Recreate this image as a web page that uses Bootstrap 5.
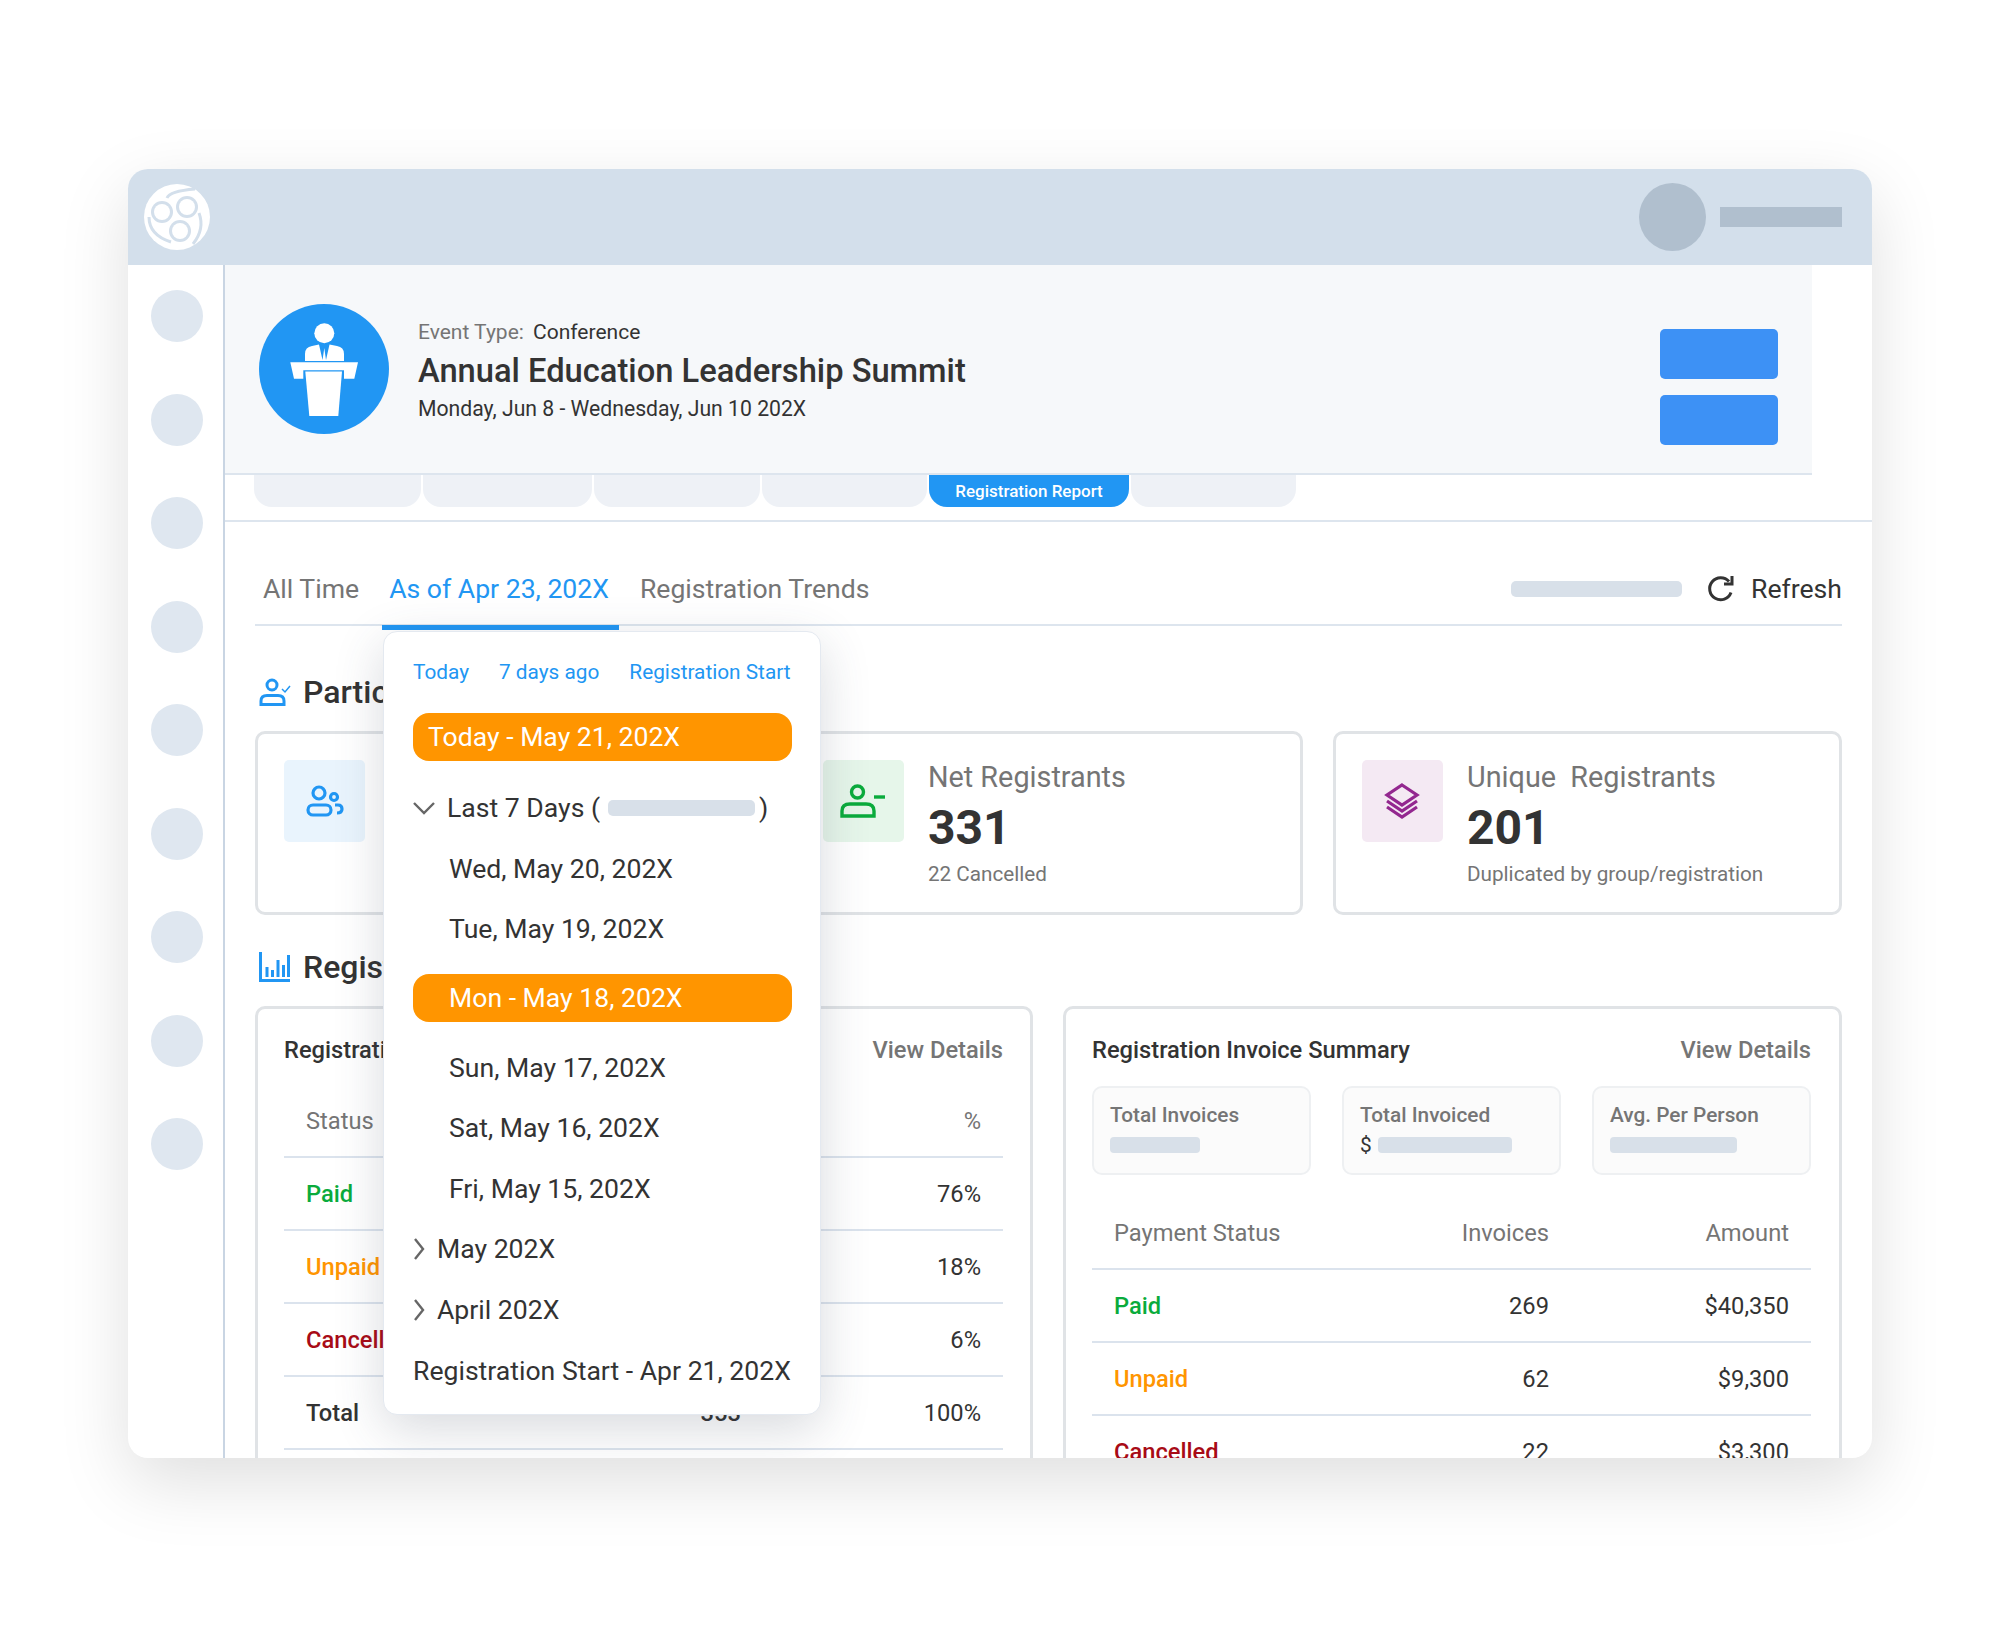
<!DOCTYPE html>
<html lang="en">
<head>
  <meta charset="UTF-8" />
  <title>Registration Report</title>
  <link href="https://cdn.jsdelivr.net/npm/bootstrap@5.3.0/dist/css/bootstrap.min.css" rel="stylesheet">
  <style>
    body { background: #fff; font-family: Roboto, "Liberation Sans", sans-serif; color: #333; width: 2000px; height: 1627px; overflow: hidden; }
    .app-window { width: 1744px; height: 1289px; margin: 169px 0 0 128px; background: #fff; border-radius: 20px; overflow: hidden; box-shadow: 0 24px 70px rgba(0,0,0,.13); position: relative; }
    .window-wrap { height: 1289px; }
    .top-strip { height: 96px; background: #d3dfeb; padding: 0 30px 0 15px; }
    .strip-avatar { width: 67px; height: 68px; border-radius: 50%; background: #b0bfce; margin-right: 14px; }
    .strip-name { width: 122px; height: 20px; background: #b0bfce; }
    .side-rail { width: 97px; flex: none; border-right: 2px solid #c9d5e3; padding: 25px 0 0 3px; gap: 51.5px; height: 1193px; }
    .rail-dot { width: 52px; height: 52px; border-radius: 50%; background: #dfe7f0; flex-shrink: 0; }
    .main-col { width: 1647px; flex: none; }
    .event-panel { width: 1587px; height: 210px; background: #f6f8fa; border-bottom: 2px solid #dde5ee; padding: 0 34px; }
    .event-text { margin-left: 29px; flex: 1; padding-top: 3px; }
    .event-type { font-size: 21px; line-height: 28px; }
    .event-type span { color: #757575; margin-right: 4px; }
    .event-title { font-size: 32.7px; font-weight: 500; line-height: 48px; color: #333; margin: 1px 0 0; }
    .event-date { font-size: 21.2px; line-height: 28px; }
    .btn-stack { margin-top: 36px; }
    .blue-btn { width: 118px; height: 50px; background: #3d91f5; border-radius: 5px; display: block; }
    .report-tabs { padding-left: 29px; gap: 2px; height: 32px; }
    .report-tab { height: 32px; background: #eef1f6; border-radius: 0 0 18px 18px; }
    .report-tab:nth-child(1) { width: 167px; }
    .report-tab:nth-child(2) { width: 169px; }
    .report-tab:nth-child(3) { width: 166px; }
    .report-tab:nth-child(4) { width: 165px; }
    .report-tab:nth-child(5) { width: 200px; }
    .report-tab:nth-child(6) { width: 165px; }
    .report-tab.on { background: #2196f3; color: #fff; font-size: 17px; font-weight: 500; line-height: 32px; text-align: center; }
    .tab-rule { height: 2px; background: #dde5ee; margin-top: 13px; }
    .page-body { padding: 0 30px; }
    .sub-nav { margin-top: 40px; height: 64px; border-bottom: 2px solid #dde5ee; font-size: 26.6px; line-height: 54px; color: #757575; }
    .sub-nav .nav-link { color: #757575; padding: 0 8px; height: 64px; }
    .sub-nav .nav-link.on { color: #2196f3; padding: 0 10px 0 7px; border-bottom: 5px solid #2196f3; margin: 0 13px 0 15px; height: 68px; position: relative; }
    .date-bar { width: 171px; height: 16px; background: #d8e0e9; border-radius: 5px; margin-right: 24px; }
    .refresh-btn { color: #333; font-size: 26.6px; gap: 15px; }
    .sec-head { font-size: 32px; font-weight: 500; line-height: 40px; margin: 0; color: #333; gap: 12px; }
    .first-head { margin-top: 46px; margin-bottom: 19px; }
    .next-head { margin-top: 32px; margin-bottom: 19px; }
    .stat-row { --bs-gutter-x: 30px; }
    .stat-card { height: 184px; border: 3px solid #e0e3e6; border-radius: 10px; padding: 26px 26px 0; flex-direction: row; }
    .stat-box { width: 81px; height: 82px; border-radius: 5px; flex: none; margin-right: 24px; }
    .box-blue { background: #e9f4fd; }
    .box-green { background: #e6f6ea; }
    .box-purple { background: #f4e9f3; }
    .stat-label { font-size: 28.8px; line-height: 34px; color: #757575; }
    .stat-num { font-size: 48px; font-weight: 700; line-height: 60px; margin-top: 4px; color: #333; }
    .stat-note { font-size: 20.7px; line-height: 28px; color: #757575; margin-top: 2px; }
    .sum-row { --bs-gutter-x: 31px; }
    .sum-card { height: 600px; border: 3px solid #e0e3e6; border-radius: 10px; padding: 26px 27px 0 26px; }
    .sum-card.right-card { margin-left: -1px; padding-right: 28px; }
    .sum-head { font-size: 23.7px; font-weight: 500; line-height: 30px; color: #333; }
    .sum-head a { font-weight: 500; color: #757575; text-decoration: none; }
    .mini-row { gap: 31px; margin-top: 21px; }
    .mini-card { width: 219px; height: 89px; border: 2px solid #eef0f2; border-radius: 10px; background: #fbfbfb; padding: 14px 16px 0; font-size: 20.8px; font-weight: 500; color: #757575; line-height: 26px; }
    .mini-fill { height: 16px; background: #d8e0e9; border-radius: 4px; margin-top: 9px; }
    .mini-dollar { color: #333; font-weight: 400; line-height: 16px; margin-top: 9px; gap: 6px; }
    .mini-dollar .mini-fill { margin-top: 0; }
    .sum-table { margin: 0; font-size: 23.7px; --bs-table-color: #333; --bs-table-bg: transparent; }
    .sum-table th, .sum-table td { height: 73px; padding: 2px 22px 0; vertical-align: middle; border-bottom: 2px solid #dbe3ed; }
    .sum-table th { font-weight: 400; color: #757575; padding-top: 4px; }
    .sum-table th:last-child { width: 240px; }
    .sum-table .st-paid { color: #0aab3c; font-weight: 500; }
    .sum-table .st-unpaid { color: #ff9500; font-weight: 500; }
    .sum-table .st-cancel { color: #a80b16; font-weight: 500; }
    .sum-table .st-total { font-weight: 500; }
    .left-table { margin-top: 19px; }
    .right-table { margin-top: 21px; }
    .date-pop { position: absolute; left: 255px; top: 462px; width: 438px; height: 784px; background: #fff; border: 1px solid #e4e9f0; border-radius: 14px; box-shadow: 0 14px 50px rgba(60,70,90,.2); padding: 25px 29px 0; z-index: 5; font-size: 26.6px; color: #333; }
    .pop-links { font-size: 20.8px; line-height: 30px; gap: 30px; }
    .pop-links a { color: #2196f3; text-decoration: none; }
    .pop-bar { width: 379px; height: 48px; background: #ff9500; border-radius: 16px; color: #fff; line-height: 48px; padding-left: 15px; }
    .bar-one { margin-top: 26px; margin-bottom: 17px; }
    .bar-two { margin-top: 14px; margin-bottom: 16px; padding-left: 36px; }
    .pop-row { height: 60.5px; line-height: 60px; white-space: nowrap; }
    .pop-row.in { padding-left: 36px; }
    .pop-row.end-row { line-height: 62px; }
    .pop-fill { width: 147px; height: 16px; background: #d8e0e9; border-radius: 5px; margin: 0 4px 0 8px; }
  </style>
</head>
<body>
  <div class="window-wrap">
  <div class="app-window">
    <!-- top bar -->
    <div class="top-strip d-flex align-items-center">
      <svg width="68" height="68" viewBox="0 0 68 68">
        <circle cx="34" cy="34" r="33" fill="#fff"/>
        <path d="M24 15 Q27 8 52 6 M56 30 Q62 46 50 61 M6 34 Q6 52 28 59" fill="none" stroke="#d3dfeb" stroke-width="3"/>
        <circle cx="19" cy="29" r="11" fill="#d3dfeb"/><circle cx="19" cy="29" r="8" fill="#fff"/>
        <circle cx="44" cy="24" r="11" fill="#d3dfeb"/><circle cx="44" cy="24" r="8" fill="#fff"/>
        <circle cx="37" cy="48" r="11" fill="#d3dfeb"/><circle cx="37" cy="48" r="8" fill="#fff"/>
      </svg>
      <div class="strip-avatar ms-auto"></div>
      <div class="strip-name"></div>
    </div>

    <div class="d-flex">
      <!-- left rail -->
      <div class="side-rail d-flex flex-column align-items-center">
        <div class="rail-dot"></div><div class="rail-dot"></div><div class="rail-dot"></div>
        <div class="rail-dot"></div><div class="rail-dot"></div><div class="rail-dot"></div>
        <div class="rail-dot"></div><div class="rail-dot"></div><div class="rail-dot"></div>
      </div>

      <div class="main-col">
        <!-- event header -->
        <div class="event-panel d-flex align-items-center">
          <svg width="130" height="130" viewBox="0 0 130 130" class="flex-shrink-0">
            <circle cx="65" cy="65" r="65" fill="#2196f3"/>
            <circle cx="65.3" cy="29.3" r="10" fill="#fff"/>
            <path d="M46 57 V50 Q46 43 53 42 L60 40.5 L63.5 56 L65.3 44 L67 56 L70.5 40.5 L78 42 Q85 43 85 50 V57 Z" fill="#fff"/>
            <path d="M31.3 58.3 H99 L95.3 74.7 H85 V66.3 H44.3 V74.7 H35 Z" fill="#fff"/>
            <path d="M46.3 67.5 H83 L79.3 112 H50.3 Z" fill="#fff"/>
          </svg>
          <div class="event-text">
            <div class="event-type"><span>Event Type:</span> Conference</div>
            <h1 class="event-title">Annual Education Leadership Summit</h1>
            <div class="event-date">Monday, Jun 8 - Wednesday, Jun 10 202X</div>
          </div>
          <div class="btn-stack d-flex flex-column gap-3">
            <span class="blue-btn"></span>
            <span class="blue-btn"></span>
          </div>
        </div>

        <!-- report tabs -->
        <div class="report-tabs d-flex">
          <div class="report-tab"></div>
          <div class="report-tab"></div>
          <div class="report-tab"></div>
          <div class="report-tab"></div>
          <div class="report-tab on">Registration Report</div>
          <div class="report-tab"></div>
        </div>
        <div class="tab-rule"></div>

        <div class="page-body">
          <div class="sub-nav d-flex align-items-start">
            <a class="nav-link" href="#">All Time</a>
            <a class="nav-link on" href="#">As of Apr 23, 202X</a>
            <a class="nav-link" href="#">Registration Trends</a>
            <div class="ms-auto d-flex align-items-center" style="height:54px">
              <div class="date-bar"></div>
              <div class="refresh-btn d-flex align-items-center">
                <svg width="30" height="30" viewBox="0 0 30 30" fill="none" stroke="#333" stroke-width="3"><path d="M25 18.5 A11 11 0 1 1 23 7.5"/><path d="M26 2 V10 H18"/></svg>
                Refresh
              </div>
            </div>
          </div>

          <h2 class="sec-head first-head d-flex align-items-center">
            <svg width="32" height="28" viewBox="0 0 32 28" fill="none" stroke="#2196f3" stroke-width="3" class="flex-shrink-0 ms-1"><circle cx="13" cy="7" r="5"/><path d="M2 26.5 V23 Q2 17.5 8 17.5 H19 Q25 17.5 25 23 V26.5 Z"/><path d="M23 11 L26 14 L31 8" stroke-width="1.5"/></svg>
            Participant Summary
          </h2>
          <div class="row stat-row">
            <div class="col-4"><div class="card stat-card">
              <div class="stat-box box-blue d-flex align-items-center justify-content-center">
                <svg width="38" height="32" viewBox="0 0 38 32" fill="none" stroke="#2196f3" stroke-width="3.2"><circle cx="13" cy="8" r="6"/><circle cx="28" cy="12" r="3.5"/><rect x="2" y="20" width="23" height="10" rx="5"/><path d="M29 20 H32 Q36 20 36 24 Q36 28 31 28"/></svg>
              </div>
              <div><div class="stat-label">Total Registrants</div><div class="stat-num">353</div></div>
            </div></div>
            <div class="col-4"><div class="card stat-card">
              <div class="stat-box box-green d-flex align-items-center justify-content-center">
                <svg width="46" height="34" viewBox="0 0 46 34" fill="none" stroke="#0aab3c" stroke-width="3.4"><circle cx="17.5" cy="8" r="6"/><path d="M2 32 V27 Q2 20 10 20 H26 Q34 20 34 27 V32 Z"/><path d="M34 13 H45"/></svg>
              </div>
              <div><div class="stat-label">Net Registrants</div><div class="stat-num">331</div><div class="stat-note">22 Cancelled</div></div>
            </div></div>
            <div class="col-4"><div class="card stat-card">
              <div class="stat-box box-purple d-flex align-items-center justify-content-center">
                <svg width="36" height="36" viewBox="0 0 36 36" fill="none" stroke="#93278f" stroke-width="3.2"><path d="M18 2 L33 12 L18 22 L3 12 Z"/><path d="M3 18 L18 28 L33 18"/><path d="M3 24 L18 34 L33 24"/></svg>
              </div>
              <div><div class="stat-label">Unique&nbsp; Registrants</div><div class="stat-num">201</div><div class="stat-note">Duplicated by group/registration</div></div>
            </div></div>
          </div>

          <h2 class="sec-head next-head d-flex align-items-center">
            <svg width="32" height="30" viewBox="0 0 32 30" fill="none" stroke="#2196f3" stroke-width="3" class="flex-shrink-0 ms-1"><path d="M1.5 0 V28.5 H31"/><path d="M8 25 V15 M13.5 25 V18 M19 25 V8 M24.5 25 V13 M29.5 25 V3"/></svg>
            Registration Summary
          </h2>
          <div class="row sum-row">
            <div class="col-6"><div class="card sum-card">
              <div class="sum-head d-flex justify-content-between"><span>Registration Summary</span><a href="#">View Details</a></div>
              <table class="table sum-table left-table">
                <thead><tr><th>Status</th><th class="text-end">Registrants</th><th class="text-end">%</th></tr></thead>
                <tbody>
                  <tr><td class="st-paid">Paid</td><td class="text-end">269</td><td class="text-end">76%</td></tr>
                  <tr><td class="st-unpaid">Unpaid</td><td class="text-end">62</td><td class="text-end">18%</td></tr>
                  <tr><td class="st-cancel">Cancelled</td><td class="text-end">22</td><td class="text-end">6%</td></tr>
                  <tr><td class="st-total">Total</td><td class="text-end st-total">353</td><td class="text-end">100%</td></tr>
                </tbody>
              </table>
            </div></div>
            <div class="col-6"><div class="card sum-card right-card">
              <div class="sum-head d-flex justify-content-between"><span>Registration Invoice Summary</span><a href="#">View Details</a></div>
              <div class="mini-row d-flex">
                <div class="mini-card">Total Invoices<div class="mini-fill" style="width:90px"></div></div>
                <div class="mini-card">Total Invoiced<div class="mini-dollar d-flex"><span>$</span><div class="mini-fill" style="width:134px"></div></div></div>
                <div class="mini-card">Avg. Per Person<div class="mini-fill" style="width:127px"></div></div>
              </div>
              <table class="table sum-table right-table">
                <thead><tr><th>Payment Status</th><th class="text-end">Invoices</th><th class="text-end">Amount</th></tr></thead>
                <tbody>
                  <tr><td class="st-paid">Paid</td><td class="text-end">269</td><td class="text-end">$40,350</td></tr>
                  <tr><td class="st-unpaid">Unpaid</td><td class="text-end">62</td><td class="text-end">$9,300</td></tr>
                  <tr><td class="st-cancel">Cancelled</td><td class="text-end">22</td><td class="text-end">$3,300</td></tr>
                </tbody>
              </table>
            </div></div>
          </div>
        </div>
      </div>
    </div>

    <!-- date dropdown -->
    <div class="date-pop">
      <div class="pop-links d-flex"><a href="#">Today</a><a href="#">7 days ago</a><a href="#">Registration Start</a></div>
      <div class="pop-bar bar-one">Today - May 21, 202X</div>
      <div class="pop-row d-flex align-items-center">
        <svg width="22" height="14" viewBox="0 0 22 14" fill="none" stroke="#666" stroke-width="2.4" class="me-2 flex-shrink-0"><path d="M1 2 L11 12 L21 2"/></svg>
        <span class="ms-1">Last 7 Days (</span><div class="pop-fill"></div><span>)</span>
      </div>
      <div class="pop-row in">Wed, May 20, 202X</div>
      <div class="pop-row in">Tue, May 19, 202X</div>
      <div class="pop-bar bar-two">Mon - May 18, 202X</div>
      <div class="pop-row in">Sun, May 17, 202X</div>
      <div class="pop-row in">Sat, May 16, 202X</div>
      <div class="pop-row in">Fri, May 15, 202X</div>
      <div class="pop-row d-flex align-items-center">
        <svg width="12" height="24" viewBox="0 0 12 24" fill="none" stroke="#666" stroke-width="2.4" class="me-2 flex-shrink-0"><path d="M2 2 L10 12 L2 22"/></svg>
        <span class="ms-1">May 202X</span>
      </div>
      <div class="pop-row d-flex align-items-center">
        <svg width="12" height="24" viewBox="0 0 12 24" fill="none" stroke="#666" stroke-width="2.4" class="me-2 flex-shrink-0"><path d="M2 2 L10 12 L2 22"/></svg>
        <span class="ms-1">April 202X</span>
      </div>
      <div class="pop-row end-row">Registration Start - Apr 21, 202X</div>
    </div>
  </div>
  </div>
  <script src="https://cdn.jsdelivr.net/npm/bootstrap@5.3.0/dist/js/bootstrap.bundle.min.js"></script>
</body>
</html>
